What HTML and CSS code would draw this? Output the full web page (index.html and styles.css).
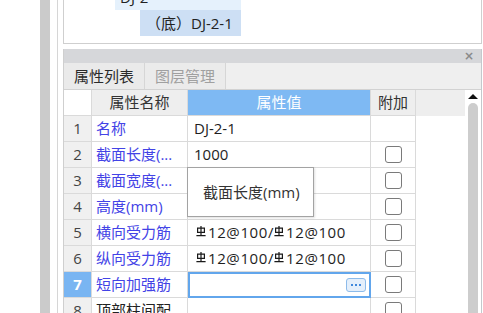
FILE: index.html
```html
<!DOCTYPE html>
<html lang="zh-CN">
<head>
<meta charset="utf-8">
<link rel="stylesheet" href="styles.css">
</head>
<body>
<div class="screen">
  <div class="gutter-white"></div>
  <div class="gutter-bar"></div>
  <div class="gutter-gap"></div>
  <div class="gutter-line"></div>
  <div class="gutter-gap2"></div>
  <div class="main">
    <div class="tree-box">
      <div class="tree-row parent"><span class="minus">－</span><span class="node">DJ-2</span></div>
      <div class="tree-row child"><span class="node sel">（底）DJ-2-1</span></div>
    </div>
    <div class="panel">
      <div class="titlebar"><span class="close">×</span></div>
      <div class="tabs">
        <div class="tab active">属性列表</div>
        <div class="tab">图层管理</div>
      </div>
      <div class="grid-wrap">
        <div class="table">
          <div class="row head">
            <div class="c num"></div>
            <div class="c name">属性名称</div>
            <div class="c val hsel">属性值</div>
            <div class="c ext">附加</div>
            <div class="c fill"></div>
          </div>
          <div class="row">
            <div class="c num">1</div><div class="c name">名称</div><div class="c val">DJ-2-1</div><div class="c ext"></div><div class="c fill"></div>
          </div>
          <div class="row">
            <div class="c num">2</div><div class="c name">截面长度(...</div><div class="c val">1000</div><div class="c ext"><span class="cb"></span></div><div class="c fill"></div>
          </div>
          <div class="row">
            <div class="c num">3</div><div class="c name">截面宽度(...</div><div class="c val"></div><div class="c ext"><span class="cb"></span></div><div class="c fill"></div>
          </div>
          <div class="row">
            <div class="c num">4</div><div class="c name">高度(mm)</div><div class="c val"></div><div class="c ext"><span class="cb"></span></div><div class="c fill"></div>
          </div>
          <div class="row">
            <div class="c num">5</div><div class="c name">横向受力筋</div>
            <div class="c val rebar"><svg class="rb" viewBox="0 0 10 11" width="10" height="11"><path d="M1.6 2.2h6.8v4.2H1.6z M5 0v9.6 M0.4 9.6h9.2" fill="none" stroke="#1a1a1a" stroke-width="1.2"/></svg>12@100/<svg class="rb" viewBox="0 0 10 11" width="10" height="11"><path d="M1.6 2.2h6.8v4.2H1.6z M5 0v9.6 M0.4 9.6h9.2" fill="none" stroke="#1a1a1a" stroke-width="1.2"/></svg>12@100</div>
            <div class="c ext"><span class="cb"></span></div><div class="c fill"></div>
          </div>
          <div class="row">
            <div class="c num">6</div><div class="c name">纵向受力筋</div>
            <div class="c val rebar"><svg class="rb" viewBox="0 0 10 11" width="10" height="11"><path d="M1.6 2.2h6.8v4.2H1.6z M5 0v9.6 M0.4 9.6h9.2" fill="none" stroke="#1a1a1a" stroke-width="1.2"/></svg>12@100/<svg class="rb" viewBox="0 0 10 11" width="10" height="11"><path d="M1.6 2.2h6.8v4.2H1.6z M5 0v9.6 M0.4 9.6h9.2" fill="none" stroke="#1a1a1a" stroke-width="1.2"/></svg>12@100</div>
            <div class="c ext"><span class="cb"></span></div><div class="c fill"></div>
          </div>
          <div class="row">
            <div class="c num nsel">7</div><div class="c name">短向加强筋</div>
            <div class="c val editing"><span class="more"><i></i><i></i><i></i></span></div>
            <div class="c ext"><span class="cb"></span></div><div class="c fill"></div>
          </div>
          <div class="row">
            <div class="c num">8</div><div class="c name black">顶部柱间配...</div><div class="c val"></div><div class="c ext"><span class="cb"></span></div><div class="c fill"></div>
          </div>
        </div>
        <div class="scroll">
          <div class="arrow"></div>
          <div class="thumb"></div>
        </div>
        <div class="tooltip">截面长度(mm)</div>
      </div>
    </div>
  </div>
</div>
</body>
</html>
```
FILE: styles.css
```css
* { box-sizing: border-box; }
html, body { margin: 0; padding: 0; background: #fff; }
body {
  width: 483px;
  height: 313px;
  overflow: hidden;
  font-family: "Open Sans", "Noto Sans CJK SC", sans-serif;
  font-size: 15px;
  color: #222;
}
.screen { display: flex; height: 313px; }
.gutter-white { width: 40px; background: #fff; }
.gutter-bar { width: 10px; background: #cbcbcb; }
.gutter-gap { width: 7px; background: #fff; }
.gutter-line { width: 1px; background: #d6d6d6; }
.gutter-gap2 { width: 5px; background: #fff; }
.main { width: 419px; display: flex; flex-direction: column; }

.tree-box {
  height: 44px;
  border: 1px solid #cfcfcf;
  border-top: none;
  overflow: hidden;
  background: #fff;
}
.tree-row { height: 26px; display: flex; align-items: center; white-space: nowrap; }
.tree-row.parent { margin-top: -16px; }
.minus { width: 12px; margin-left: 38px; color: #555; font-size: 13px; }
.parent .node { margin-left: 1px; background: #e5f1fc; height: 26px; line-height: 26px; width: 126px; padding-left: 5px; }
.child .node { margin-left: 76px; background: #cddff4; height: 26px; line-height: 26px; width: 101px; padding-left: 6px; color: #222; }

.panel {
  margin-top: 5px;
  flex: 1;
  border-left: 1px solid #cfcfcf;
  border-right: 1px solid #c4c8cc;
  display: flex;
  flex-direction: column;
  min-height: 0;
}
.titlebar {
  height: 14px;
  background: #d6d7da;
  display: flex;
  justify-content: flex-end;
  align-items: center;
  padding-right: 7px;
}
.close { font-family: "DejaVu Sans", sans-serif; font-size: 12px; line-height: 12px; color: #8a8a8a; font-weight: bold; }
.tabs {
  height: 27px;
  background: #efefef;
  border-bottom: 1px solid #d2d2d2;
  display: flex;
}
.tab {
  width: 81px;
  border-right: 1px solid #d6d6d6;
  text-align: center;
  line-height: 26px;
  color: #a0a0a0;
  background: #ebebeb;
}
.tab.active { width: 81px; color: #2a2a2a; background: #eaeaea; }

.grid-wrap { position: relative; flex: 1; display: flex; min-height: 0; overflow: hidden; }
.table { width: 401px; }
.row { display: grid; grid-template-columns: 28px 96px 183px 45px 49px; height: 26px; }
.c {
  border-right: 1px solid #dadada;
  border-bottom: 1px solid #dadada;
  line-height: 25px;
  white-space: nowrap;
  overflow: hidden;
}
.num { background: #f0f0f0; text-align: center; color: #444; }
.name { padding-left: 4px; color: #4343e6; }
.name.black { color: #222; }
.val { padding-left: 6px; color: #1e1e1e; position: relative; }
.rebar { padding-left: 8px; letter-spacing: 0.6px; }
.ext { display: flex; align-items: center; justify-content: center; }
.fill { border-right: none; border-bottom: none; }
.head .c { background: #eeeeee; color: #333; }
.head .num { background: #fff; }
.head .name { text-align: center; padding-left: 0; }
.head .val { padding-left: 0; text-align: center; }
.head .hsel { background: #7eb9f3; color: #fff; }
.head .fill { background: #eeeeee; }
.nsel { background: #79b5f2; color: #fff; font-weight: bold; }
.cb {
  width: 17px;
  height: 17px;
  border: 1.5px solid #7a7a7a;
  border-radius: 3px;
  background: #fff;
}
.rb { vertical-align: 1px; margin-right: 2px; }
.editing { border: 2px solid #62a6ec; }
.more {
  position: absolute;
  right: 3px;
  top: 4px;
  width: 20px;
  height: 14px;
  border: 1px solid #8dbbea;
  border-radius: 3px;
  background: #e4effb;
  display: flex;
  align-items: center;
  justify-content: center;
  gap: 2px;
}
.more i { width: 2px; height: 2px; background: #3f88dc; display: block; }

.scroll { width: 16px; position: relative; background: #fff; }
.arrow {
  position: absolute;
  left: 3px;
  top: 4px;
  width: 0;
  height: 0;
  border-left: 5px solid transparent;
  border-right: 5px solid transparent;
  border-bottom: 5px solid #111;
}
.thumb {
  position: absolute;
  left: 3px;
  top: 13px;
  width: 10px;
  bottom: -10px;
  background: #cdcdcd;
  border-radius: 5px 5px 0 0;
}
.tooltip {
  position: absolute;
  left: 123px;
  top: 77px;
  width: 127px;
  height: 50px;
  background: #fff;
  border: 1px solid #a3a3a3;
  box-shadow: 1px 1px 2px rgba(0,0,0,0.12);
  padding-left: 15px;
  line-height: 48px;
  color: #333;
  white-space: nowrap;
}
```
